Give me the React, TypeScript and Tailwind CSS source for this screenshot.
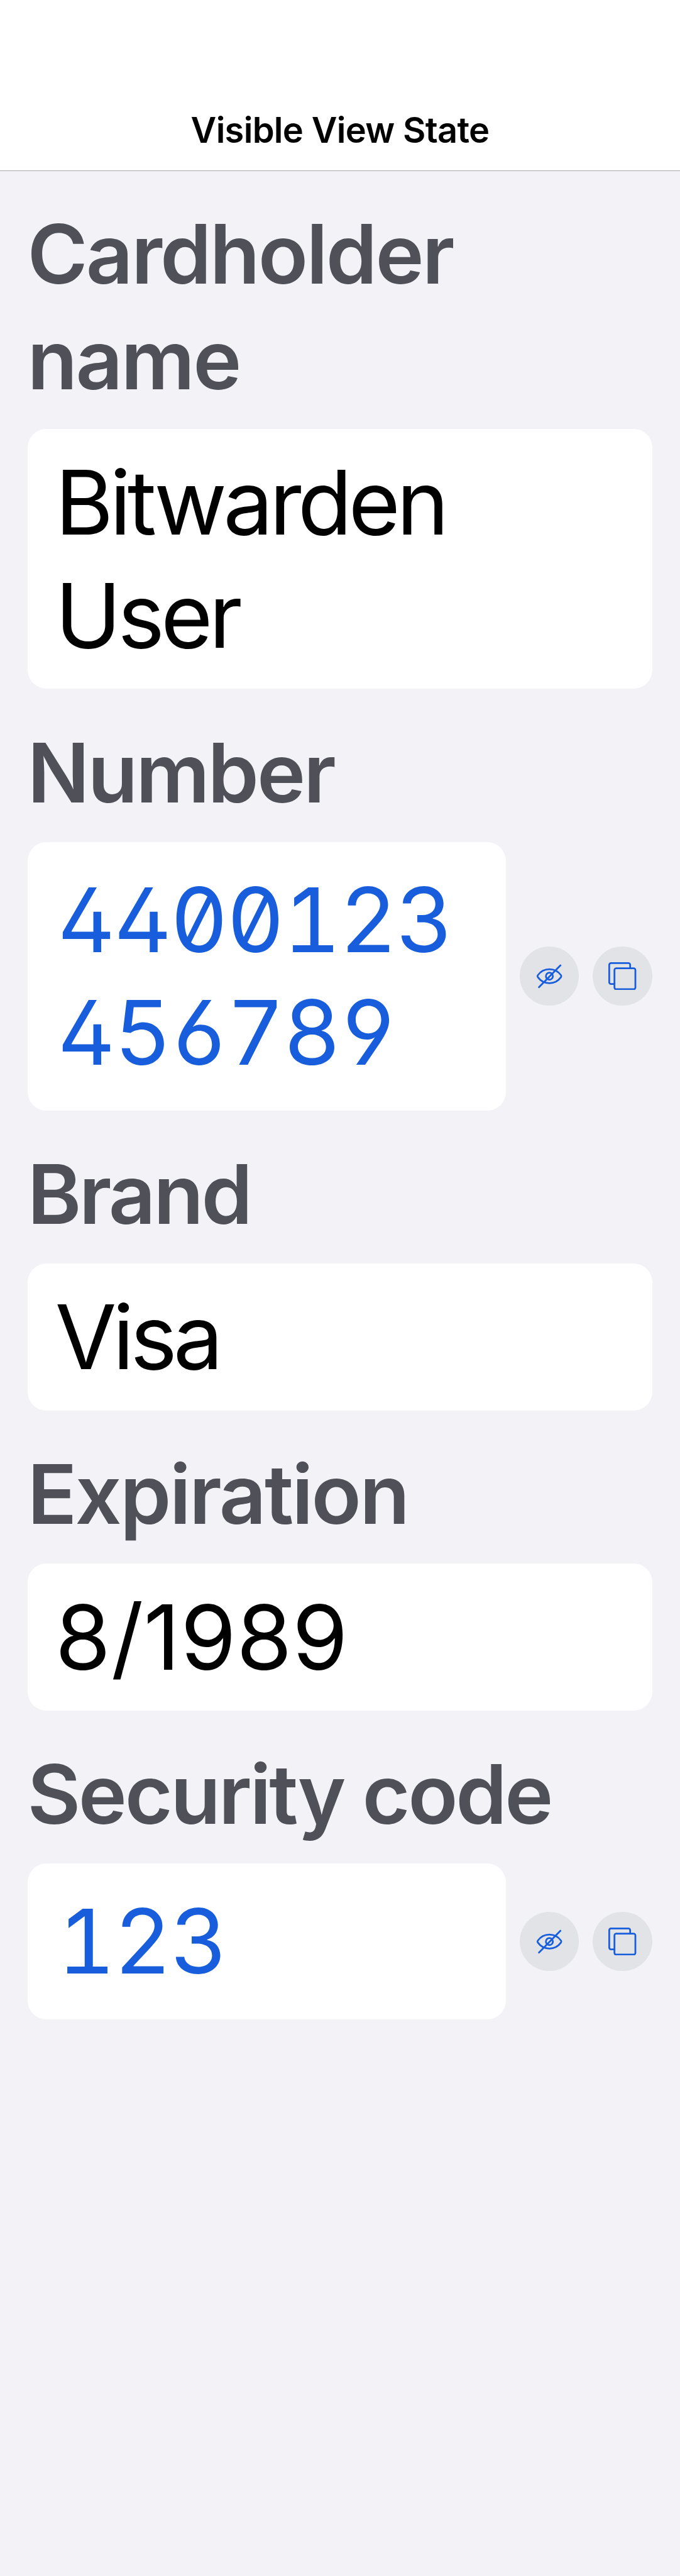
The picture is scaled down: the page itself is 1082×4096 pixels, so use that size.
import React from "react";

function EyeSlashIcon() {
  return (
    <svg viewBox="0 0 48 48" className="size-[44.4px]" fill="none" stroke="#175ddc" strokeWidth="3" strokeLinecap="round" strokeLinejoin="round">
      <path d="M4 22.4C8.700 15.800 15.700 12 24 12s15.300 3.800 20 10.400c.8 1.100.8 2.100 0 3.200C39.300 32.200 32.300 36 24 36S8.700 32.200 4 25.600c-.8-1.100-.8-2.100 0-3.200Z" />
      <circle cx="24" cy="24" r="6" />
      <path d="M43 5.500 6 43" />
    </svg>
  );
}

function CopyIcon() {
  return (
    <svg viewBox="0 0 48 48" className="size-[44.4px]" fill="none" stroke="#175ddc" strokeWidth="3" strokeLinejoin="round">
      <path d="M37.500 10.500V4.500a3 3 0 0 0-3-3h-30a3 3 0 0 0-3 3v30a3 3 0 0 0 3 3h6" />
      <rect x="10.500" y="10.500" width="36" height="36" rx="3" />
    </svg>
  );
}

function CircleButton({ label, children }: { label: string; children: React.ReactNode }) {
  return (
    <button aria-label={label} className="flex size-[94.3px] shrink-0 items-center justify-center rounded-full bg-[#e2e3e7]">
      {children}
    </button>
  );
}

function Label({ className, children }: { className: string; children: React.ReactNode }) {
  return (
    <h2 className={`-ml-px whitespace-pre pb-[26px] text-[130.5px] leading-[168px] font-semibold text-[#505059] ${className}`}>
      {children}
    </h2>
  );
}

function Value({ className, children }: { className: string; children: React.ReactNode }) {
  return (
    <div className={`flex flex-1 items-center whitespace-pre rounded-[30px] bg-white leading-[179.35px] ${className}`}>
      {children}
    </div>
  );
}

const digits = "pl-[47px] text-[142px] tracking-[-2.3px] text-[#175ddc] [font-feature-settings:'tnum','zero','cv02','cv03','cv04']";

export default function App() {
  return (
    <div className="h-[4096px] w-[1082px] overflow-hidden bg-[#f2f2f7] font-['Inter',sans-serif] text-black">
      <header className="flex h-[272px] items-end justify-center border-b border-[#a9a9ad] bg-white pb-[32px]">
        <h1 className="whitespace-pre text-[56px] leading-[64px] font-semibold tracking-[-0.7px]">Visible View State</h1>
      </header>
      <main className="px-[44.4px]">
        <Label className="pt-[48px] tracking-[-2.8px]">{"Cardholder\nname"}</Label>
        <div className="flex">
          <Value className="h-[413px] pl-[43.4px] text-[141.5px] tracking-[-5.9px]">{"Bitwarden\nUser"}</Value>
        </div>
        <Label className="pt-[49.5px] tracking-[-3.1px]">Number</Label>
        <div className="flex items-center gap-[22.2px]">
          <Value className={`h-[427px] ${digits}`}>{"4400123\n456789"}</Value>
          <CircleButton label="Hide number"><EyeSlashIcon /></CircleButton>
          <CircleButton label="Copy number"><CopyIcon /></CircleButton>
        </div>
        <Label className="pt-[49.5px] tracking-[-3.6px]">Brand</Label>
        <div className="flex">
          <Value className="h-[234px] pl-[43.4px] text-[141.5px] tracking-[-6.2px]">Visa</Value>
        </div>
        <Label className="pt-[49px] tracking-[-2.8px]">Expiration</Label>
        <div className="flex">
          <Value className="h-[234px] pl-[43.4px] text-[143px] tracking-[0.4px]">8/1989</Value>
        </div>
        <Label className="pt-[49px] tracking-[-3.4px]">Security code</Label>
        <div className="flex items-center gap-[22.2px]">
          <Value className={`h-[248px] ${digits}`}>123</Value>
          <CircleButton label="Hide security code"><EyeSlashIcon /></CircleButton>
          <CircleButton label="Copy security code"><CopyIcon /></CircleButton>
        </div>
      </main>
    </div>
  );
}
